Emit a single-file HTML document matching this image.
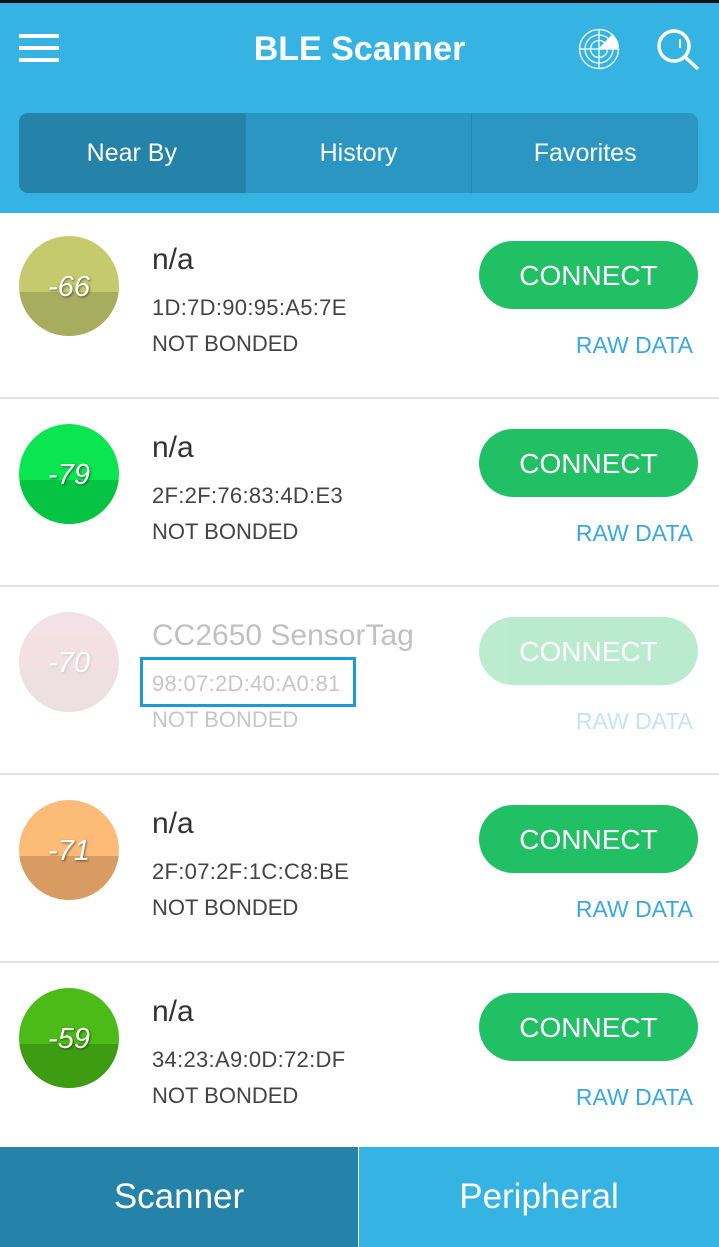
<!DOCTYPE html>
<html><head><meta charset="utf-8"><style>
*{margin:0;padding:0;box-sizing:border-box}
body{width:719px;height:1247px;overflow:hidden;background:#fff;font-family:"Liberation Sans",sans-serif;position:relative}
.top{position:absolute;left:0;top:0;width:719px;height:213px;background:#35b4e3;border-top:3px solid #111}
.ham{position:absolute;left:19px;width:40px;height:4px;background:#fff}
.title{position:absolute;left:0;width:719px;top:27px;text-align:center;color:#fff;font-weight:bold;font-size:34px}
.tabs{position:absolute;left:19px;top:110px;width:679px;height:80px;border-radius:9px;overflow:hidden;display:flex;background:#2b96c2}
.tabs div{flex:1;color:#fff;font-size:25px;text-align:center;line-height:80px;border-left:1px solid #2586b0}
.tabs div.sel{background:#2582a8;border-left:none}
.row{position:absolute;left:0;width:719px;height:186px;border-bottom:2px solid #e2e2e2}
.circ{position:absolute;left:19px;top:23px;width:100px;height:100px;border-radius:50%;overflow:hidden}
.circ .b{position:absolute;left:0;top:56px;width:100px;height:44px}
.circ span{position:absolute;left:0;width:100px;top:35px;text-align:center;color:#fff;font-style:italic;font-size:29px;text-shadow:1px 1px 2px rgba(0,0,0,.5)}
.name{position:absolute;left:152px;top:30px;font-size:30px;color:#333}
.mac{position:absolute;left:152px;top:82px;font-size:22px;color:#444;letter-spacing:.3px}
.nb{position:absolute;left:152px;top:118px;font-size:22px;color:#444}
.btn{position:absolute;left:479px;top:28px;width:219px;height:68px;border-radius:34px;background:#22c064;color:#fff;font-size:28px;text-align:center;line-height:70px}
.raw{position:absolute;right:26px;top:119px;font-size:23px;color:#3aa8e0}
.fade>*{opacity:.3}
.bot{position:absolute;top:1147px;height:100px;color:#fff;font-size:35px;text-align:center;line-height:100px}
</style></head><body>
<div class="top">
<div class="ham" style="top:31px"></div><div class="ham" style="top:43px"></div><div class="ham" style="top:55px"></div>
<div class="title">BLE Scanner</div>
<svg style="position:absolute;left:578px;top:25px" width="42" height="42" viewBox="0 0 42 42" fill="none" stroke="#fff" stroke-width="1.3">
<circle cx="21" cy="21" r="19.5"/><circle cx="21" cy="21" r="14"/><circle cx="21" cy="21" r="8.5"/>
<path d="M21 1.5V40.5M1.5 21H40.5"/><path d="M21 21L34 7.5A19.5 19.5 0 0 1 40.5 21Z" fill="#fff"/></svg>
<svg style="position:absolute;left:656px;top:25px" width="46" height="46" viewBox="0 0 46 46" fill="none" stroke="#fff" stroke-width="3.5">
<circle cx="18" cy="18" r="15"/><path d="M29 29L42 41"/><path d="M24 11V20" stroke-width="2"/></svg>
<div class="tabs"><div class="sel">Near By</div><div>History</div><div>Favorites</div></div>
</div>

<div class="row" style="top:213px">
<div class="circ" style="background:#c5cb6c"><div class="b" style="background:#a8ac5e"></div><span>-66</span></div>
<div class="name">n/a</div><div class="mac">1D:7D:90:95:A5:7E</div><div class="nb">NOT BONDED</div>
<div class="btn">CONNECT</div><div class="raw">RAW DATA</div></div>

<div class="row" style="top:401px">
<div class="circ" style="background:#0ae650"><div class="b" style="background:#05c443"></div><span>-79</span></div>
<div class="name">n/a</div><div class="mac">2F:2F:76:83:4D:E3</div><div class="nb">NOT BONDED</div>
<div class="btn">CONNECT</div><div class="raw">RAW DATA</div></div>

<div class="row fade" style="top:589px">
<div class="circ" style="background:#d59aab"><div class="b" style="background:#c29aa6"></div><span>-70</span></div>
<div class="name">CC2650 SensorTag</div><div class="mac">98:07:2D:40:A0:81</div><div class="nb">NOT BONDED</div>
<div class="btn">CONNECT</div><div class="raw">RAW DATA</div></div>
<div style="position:absolute;left:140px;top:657px;width:216px;height:50px;border:3px solid #1a9ad8"></div>

<div class="row" style="top:777px">
<div class="circ" style="background:#fdbb78"><div class="b" style="background:#d89c63"></div><span>-71</span></div>
<div class="name">n/a</div><div class="mac">2F:07:2F:1C:C8:BE</div><div class="nb">NOT BONDED</div>
<div class="btn">CONNECT</div><div class="raw">RAW DATA</div></div>

<div class="row" style="top:965px;border-bottom:none">
<div class="circ" style="background:#4cbb17"><div class="b" style="background:#3d9c12"></div><span>-59</span></div>
<div class="name">n/a</div><div class="mac">34:23:A9:0D:72:DF</div><div class="nb">NOT BONDED</div>
<div class="btn">CONNECT</div><div class="raw">RAW DATA</div></div>

<div class="bot" style="left:0;width:358px;background:#2582a8">Scanner</div>
<div class="bot" style="left:359px;width:360px;background:#35b4e3">Peripheral</div>
</body></html>
